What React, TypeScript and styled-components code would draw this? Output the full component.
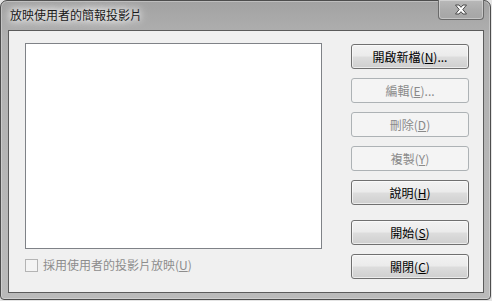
import React from 'react';
import styled, { createGlobalStyle } from 'styled-components';

const GlobalStyle = createGlobalStyle`
  html, body {
    margin: 0;
    padding: 0;
    background: #e4e4e4;
  }
  body {
    font-family: "Noto Sans CJK TC", "Liberation Sans", sans-serif;
    font-size: 12px;
  }
`;

const Window = styled.div`
  box-sizing: border-box;
  width: 491px;
  height: 300px;
  border: 1px solid #4d4d4d;
  border-radius: 7px 7px 4px 4px;
  background: linear-gradient(180deg, #a2a2a2 0%, #b0b0b0 12%, #b6b6b6 60%, #bababa 100%);
  box-shadow: inset 0 0 0 1px rgba(255, 255, 255, 0.3);
  display: flex;
  flex-direction: column;
  padding: 0 6px 6px 7px;
`;

const TitleBar = styled.div`
  height: 29px;
  display: flex;
  align-items: flex-start;
  justify-content: space-between;
`;

const Title = styled.span`
  margin: 6px 0 0 2px;
  font-size: 12px;
  line-height: 16px;
  color: #1a1a1a;
  text-shadow: 0 0 6px #ffffff, 0 0 10px #ffffff, 0 0 14px rgba(255, 255, 255, 0.8);
`;

const CloseButton = styled.div`
  box-sizing: border-box;
  width: 46px;
  height: 20px;
  margin-top: -1px;
  border: 1px solid #6a6a6a;
  border-top: none;
  border-radius: 0 0 4px 4px;
  background: linear-gradient(180deg, #b9b9b9 0%, #acacac 50%, #a6a6a6 100%);
  box-shadow: inset 0 0 0 1px rgba(255, 255, 255, 0.35);
  display: flex;
  align-items: center;
  justify-content: center;
`;

const Client = styled.div`
  flex: 1;
  background: #f0f0f0;
  border: 1px solid #5b5b5b;
  display: grid;
  grid-template-columns: 297px 118px;
  column-gap: 29px;
  padding: 12px 0 0 16px;
`;

const LeftColumn = styled.div`
  display: flex;
  flex-direction: column;
`;

const ListBox = styled.div`
  box-sizing: border-box;
  height: 206px;
  background: #ffffff;
  border: 1px solid #7f8287;
`;

const CheckRow = styled.label`
  margin-top: 9px;
  display: flex;
  align-items: center;
  gap: 5px;
  color: #8d8d8d;
  line-height: 14px;
`;

const CheckBox = styled.span`
  box-sizing: border-box;
  width: 13px;
  height: 13px;
  border: 1px solid #b4b4b4;
  background: #f4f4f4;
`;

const ButtonColumn = styled.div`
  display: flex;
  flex-direction: column;
  gap: 9px;
  padding-top: 1px;
`;

const Button = styled.div<{ $disabled?: boolean; $gap?: boolean }>`
  box-sizing: border-box;
  height: 25px;
  margin-top: ${(p) => (p.$gap ? '6px' : '0')};
  border: 1px solid ${(p) => (p.$disabled ? '#adb2b5' : '#707070')};
  border-radius: 3px;
  background: ${(p) =>
    p.$disabled
      ? '#f4f4f4'
      : 'linear-gradient(180deg, #f2f2f2 0%, #ebebeb 48%, #dddddd 52%, #cfcfcf 100%)'};
  box-shadow: ${(p) => (p.$disabled ? 'none' : 'inset 0 0 0 1px rgba(255,255,255,0.6)')};
  color: ${(p) => (p.$disabled ? '#8a8a8a' : '#000000')};
  display: flex;
  align-items: center;
  justify-content: center;
  line-height: 14px;
`;

const Mnemonic = styled.span`
  text-decoration: underline;
  text-underline-offset: 1px;
`;

const buttons = [
  { pre: '開啟新檔(', key: 'N', post: ')...', disabled: false },
  { pre: '編輯(', key: 'E', post: ')...', disabled: true },
  { pre: '刪除(', key: 'D', post: ')', disabled: true },
  { pre: '複製(', key: 'Y', post: ')', disabled: true },
  { pre: '說明(', key: 'H', post: ')', disabled: false },
  { pre: '開始(', key: 'S', post: ')', disabled: false, gap: true },
  { pre: '關閉(', key: 'C', post: ')', disabled: false },
];

const App: React.FC = () => {
  return (
    <>
      <GlobalStyle />
      <Window>
        <TitleBar>
          <Title>放映使用者的簡報投影片</Title>
          <CloseButton>
            <svg width="14" height="11" viewBox="0 0 14 11">
              <path
                d="M1.5 1 H5 L7 3.3 L9 1 H12.5 L8.8 5.5 L12.5 10 H9 L7 7.7 L5 10 H1.5 L5.2 5.5 Z"
                fill="#ffffff"
                stroke="#4a4a4a"
                strokeWidth="1"
                strokeLinejoin="round"
              />
            </svg>
          </CloseButton>
        </TitleBar>
        <Client>
          <LeftColumn>
            <ListBox />
            <CheckRow>
              <CheckBox />
              <span>
                採用使用者的投影片放映(<Mnemonic>U</Mnemonic>)
              </span>
            </CheckRow>
          </LeftColumn>
          <ButtonColumn>
            {buttons.map((b) => (
              <Button key={b.key} $disabled={b.disabled} $gap={b.gap}>
                <span>
                  {b.pre}
                  <Mnemonic>{b.key}</Mnemonic>
                  {b.post}
                </span>
              </Button>
            ))}
          </ButtonColumn>
        </Client>
      </Window>
    </>
  );
};

export default App;
